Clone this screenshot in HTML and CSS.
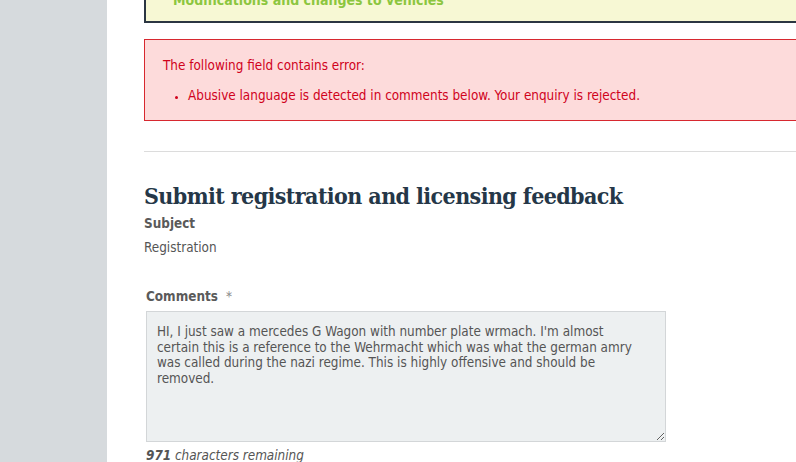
FILE: index.html
```html
<!DOCTYPE html>
<html lang="en">
<head>
    <meta charset="UTF-8">
    <meta name="viewport" content="width=device-width, initial-scale=1.0">
    <title>Registration and licensing feedback</title>
    <link rel="stylesheet" href="styles.css">
</head>
<body>
<div class="page">
    <div class="sidebar"></div>
    <div class="main">
        <div class="notice">
            <p class="notice-link">Modifications and changes to vehicles</p>
        </div>

        <div class="error-box">
            <p class="error-title">The following field contains error:</p>
            <ul class="error-list">
                <li>Abusive language is detected in comments below. Your enquiry is rejected.</li>
            </ul>
        </div>

        <hr class="divider">

        <h1 class="title">Submit registration and licensing feedback</h1>

        <div class="field">
            <p class="label">Subject</p>
            <p class="value">Registration</p>
        </div>

        <div class="field comments">
            <label class="label" for="comments">Comments <span class="req">*</span></label>
            <textarea id="comments" class="comment-box">HI, I just saw a mercedes G Wagon with number plate wrmach. I'm almost
certain this is a reference to the Wehrmacht which was what the german amry
was called during the nazi regime. This is highly offensive and should be
removed.</textarea>
            <p class="counter"><b>971</b> characters remaining</p>
        </div>
    </div>
</div>
</body>
</html>
```

FILE: styles.css
```css
html,
body{
    margin: 0;
    height: 100%;
    overflow: hidden;
}
body{
    font-family: "DejaVu Sans Condensed", "DejaVu Sans", sans-serif;
    font-size: 13.4px;
    color: #555;
    background-color: white;
}
.page{
    display: flex;
    height: 100%;
}
.sidebar{
    width: 107px;
    flex-shrink: 0;
    background-color: #d6dadd;
}
.main{
    width: 760px;
    flex-shrink: 0;
    padding-left: 37px;
}
.notice{
    margin-top: -40px;
    height: 61px;
    background-color: #f7f8d4;
    border: 1px solid #2b3642;
    border-width: 0 0 2px 2px;
}
.notice-link{
    margin: 0;
    padding: 32px 0 0 27px;
    font-weight: bold;
    font-size: 14px;
    color: #8cc63f;
}
.error-box{
    margin-top: 16px;
    height: 80px;
    background-color: #fddbdb;
    border: 1px solid #d7282f;
}
.error-title{
    margin: 0;
    padding: 18px 0 0 18px;
    color: #d0021b;
}
.error-list{
    margin: 15px 0 0 0;
    padding-left: 43px;
    color: #d0021b;
}
.error-list li::marker{
    font-size: 11px;
}
.divider{
    margin: 30px 0 0 0;
    border: 0;
    border-top: 1px solid #dcdcdc;
}
.title{
    margin: 29px 0 0 0;
    font-family: "DejaVu Serif Condensed", "DejaVu Serif", serif;
    font-size: 23px;
    font-weight: bold;
    letter-spacing: -0.6px;
    color: #253748;
    line-height: 30px;
}
.label{
    display: block;
    margin: 0;
    font-weight: bold;
    color: #5a5a5a;
}
.value{
    margin: 9px 0 0 0;
}
.field{
    margin-top: 5px;
}
.comments{
    margin-top: 34px;
    padding-left: 2px;
}
.req{
    font-weight: normal;
    color: #888;
    margin-left: 4px;
}
.comment-box{
    display: block;
    margin-top: 7px;
    width: 520px;
    height: 131px;
    box-sizing: border-box;
    padding: 12px 10px;
    font-family: "DejaVu Sans Condensed", "DejaVu Sans", sans-serif;
    font-size: 13.4px;
    line-height: 15.5px;
    color: #555;
    background-color: #edf0f1;
    border: 1px solid #d3d6d8;
    border-radius: 0;
    resize: vertical;
}
.counter{
    margin: 6px 0 0 0;
    font-style: italic;
}
```
